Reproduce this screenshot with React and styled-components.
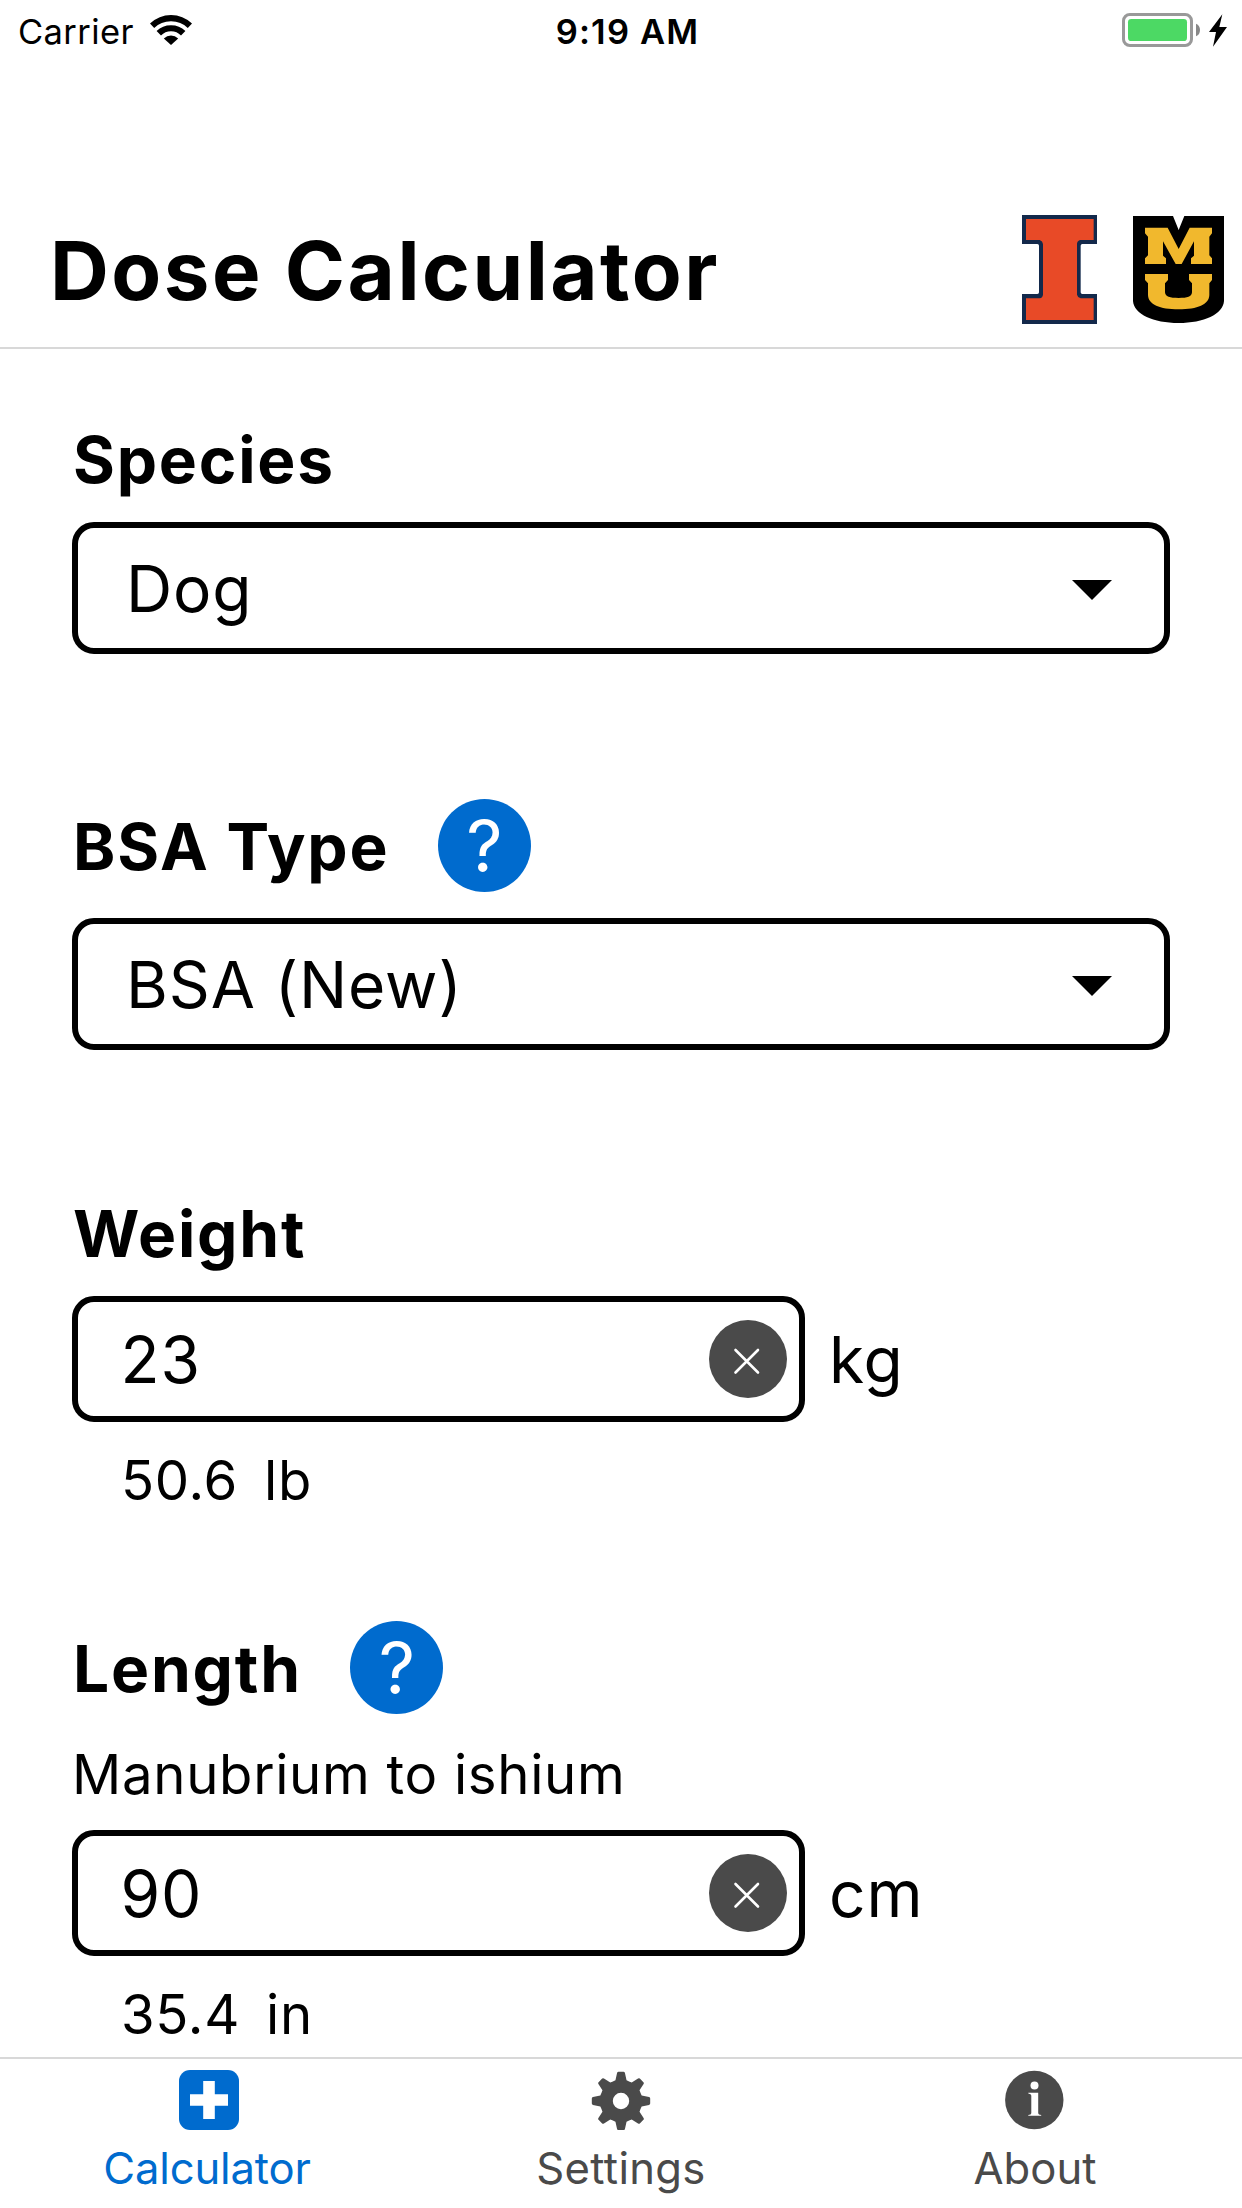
import React from "react";
import styled, { createGlobalStyle } from "styled-components";

const GlobalStyle = createGlobalStyle`
  *, *::before, *::after { box-sizing: border-box; }
  body { margin: 0; background: #fff; }
`;

const BLUE = "#006bce";
const GREY = "#4a4a4a";

const Screen = styled.div`
  width: 1242px;
  height: 2208px;
  display: flex;
  flex-direction: column;
  overflow: hidden;
  background: #fff;
  color: #000;
  font-family: Inter, "Liberation Sans", sans-serif;
`;

const StatusBar = styled.div`
  flex: none;
  height: 63px;
  display: grid;
  grid-template-columns: 1fr auto 1fr;
  padding: 0 14px 0 18px;
  font-size: 34.5px;
  line-height: 63px;
`;

const Carrier = styled.div`
  display: flex;
  gap: 16px;
  letter-spacing: 0.4px;
`;

const WifiIcon = styled.svg`
  width: 42px;
  height: 30px;
  margin-top: 15px;
`;

const Clock = styled.div`
  font-weight: 600;
  letter-spacing: 1.2px;
  padding-left: 9px;
`;

const BatteryIcon = styled.svg`
  width: 106px;
  height: 35px;
  margin-top: 13px;
  justify-self: end;
`;

const Header = styled.header`
  flex: none;
  height: 286px;
  display: flex;
  align-items: flex-start;
  padding: 152px 18px 0 50px;
  border-bottom: 2px solid #d8d8d8;
`;

const Title = styled.h1`
  flex: 1;
  margin: 6px 0 0;
  font-size: 81.5px;
  line-height: 100px;
  font-weight: 700;
  letter-spacing: 2.5px;
`;

const Logos = styled.div`
  display: flex;
  align-items: center;
  gap: 36px;
`;

const BlockLogo = styled.svg`
  width: 75px;
  height: 109px;
`;

const ShieldLogo = styled.svg`
  width: 91px;
  height: 107px;
`;

const Form = styled.main`
  flex: 1;
  min-height: 0;
  overflow: hidden;
  padding: 71px 72px 0;
`;

const Field = styled.section`
  margin-bottom: ${(p) => p.$after || 0}px;
`;

const LabelRow = styled.div`
  display: flex;
  align-items: center;
  gap: 48.5px;
  height: ${(p) => (p.$tall ? 94 : 80)}px;
  margin-bottom: ${(p) => p.$gap ?? 22}px;
`;

const Label = styled.h2`
  margin: 0;
  padding: ${(p) => (p.$tall ? 3 : 0)}px 0 0 1px;
  font-size: 64px;
  line-height: 80px;
  font-weight: 700;
  letter-spacing: 1.8px;
`;

const HelpButton = styled.button`
  width: 93px;
  height: 93px;
  flex: none;
  margin-top: 1px;
  padding: 0;
  border: 0;
  border-radius: 50%;
  background: ${BLUE};
  color: #fff;
  font: 400 71px/94px Inter, sans-serif;
  text-align: center;
`;

const Select = styled.div`
  height: 132px;
  display: flex;
  align-items: center;
  justify-content: space-between;
  padding: 1px 52px 0 48px;
  border: 6px solid #000;
  border-radius: 22px;
  font-size: 64px;
  line-height: 80px;
  letter-spacing: 0.9px;
`;

const Caret = styled.span`
  width: 0;
  height: 0;
  margin-top: 2px;
  border: 20px solid transparent;
  border-top-color: #000;
  border-bottom: 0;
`;

const InputRow = styled.div`
  display: flex;
  align-items: center;
  gap: 24px;
  font-size: 64px;
  line-height: 80px;
  letter-spacing: 0.9px;
`;

const InputBox = styled.div`
  width: 733px;
  height: 126px;
  display: flex;
  align-items: center;
  justify-content: space-between;
  padding: 0 12px 0 42.5px;
  border: 6px solid #000;
  border-radius: 22px;
`;

const Value = styled.span`
  padding-top: 1px;
`;

const ClearButton = styled.button`
  width: 78px;
  height: 78px;
  padding: 0;
  border: 0;
  border-radius: 50%;
  background: ${GREY};
  svg { display: block; width: 78px; height: 78px; }
`;

const Hint = styled.div`
  margin-bottom: 21px;
  font-size: 54.5px;
  line-height: 70px;
  letter-spacing: 0.7px;
`;

const Converted = styled.div`
  display: flex;
  gap: 26px;
  margin-top: 23px;
  padding-left: 49px;
  font-size: 54.5px;
  line-height: 70px;
  letter-spacing: 0.7px;
`;

const TabBar = styled.nav`
  flex: none;
  height: 151px;
  display: grid;
  grid-template-columns: repeat(3, 1fr);
  border-top: 2px solid #d8d8d8;
  background: #fff;
`;

const Tab = styled.div`
  display: flex;
  flex-direction: column;
  align-items: center;
  gap: 11px;
  padding-top: 11px;
  color: ${(p) => (p.$active ? BLUE : GREY)};
  font-size: 43.6px;
  line-height: 56px;
  letter-spacing: ${(p) => p.$spacing || 0}px;
  svg {
    width: 60px;
    height: 60px;
    margin-left: ${(p) => (p.$active ? 3 : 0)}px;
  }
`;

const pt = (r, deg) => {
  const a = (deg * Math.PI) / 180;
  return `${(30 + r * Math.sin(a)).toFixed(2)} ${(31 - r * Math.cos(a)).toFixed(2)}`;
};

// Eight tapered teeth around a hub, with a round hole in the middle.
const gearPath = () => {
  let d = "";
  for (let i = 0; i < 8; i += 1) {
    const c = i * 45;
    d += `${i ? "L" : "M"}${pt(21.4, c - 15)} L${pt(28.3, c - 8)} Q${pt(29.4, c - 7)} ${pt(29.3, c - 5)}`;
    d += ` L${pt(29.3, c + 5)} Q${pt(29.4, c + 7)} ${pt(28.3, c + 8)} L${pt(21.4, c + 15)}`;
    d += ` Q${pt(21, c + 22.5)} ${pt(21.4, c + 30)} `;
  }
  return `${d}Z M38.2 31 a8.2 8.2 0 1 0 -16.4 0 a8.2 8.2 0 1 0 16.4 0 Z`;
};

const CalculatorIcon = () => (
  <svg viewBox="0 0 60 60">
    <rect width="60" height="60" rx="11" fill="currentColor" />
    <path d="M24.2 11h11.6v13.2H49v11.6H35.8V49H24.2V35.8H11V24.2h13.2z" fill="#fff" />
  </svg>
);

const SettingsIcon = () => (
  <svg viewBox="0 0 60 60">
    <path d={gearPath()} fill="currentColor" fillRule="evenodd" />
  </svg>
);

const InfoIcon = () => (
  <svg viewBox="0 0 60 60">
    <circle cx="29.3" cy="30" r="29.2" fill="currentColor" />
    <circle cx="29.5" cy="15.6" r="4" fill="#fff" />
    <path d="M23.3 22.7h9.9v20.5q0 1.5 3 1.8v.8H23.3V45q3-.3 3-1.8V25.5q0-1.7-3-2z" fill="#fff" />
  </svg>
);

const Clear = () => (
  <ClearButton aria-label="Clear">
    <svg viewBox="0 0 78 78">
      <path d="M26.5 30 49 52.5M49 30 26.5 52.5" stroke="#fff" strokeWidth="2.6" strokeLinecap="round" />
    </svg>
  </ClearButton>
);

export default function App() {
  return (
    <Screen>
      <GlobalStyle />
      <StatusBar>
        <Carrier>
          Carrier
          <WifiIcon viewBox="0 0 42 30">
            <path d="M0 8.600Q9 0 21 0t21 8.600L37.800 13Q31 6.300 21 6.300T4.200 13z" />
            <path d="M6.600 16Q12.500 10.300 21 10.300T35.400 16L31 20.600Q27 16.300 21 16.300T11 20.600z" />
            <path d="M13.800 23.400Q17 20.600 21 20.600t7.200 2.800L21 30z" />
          </WifiIcon>
        </Carrier>
        <Clock>9:19 AM</Clock>
        <BatteryIcon viewBox="366 39 318 105">
          <rect x="370.500" y="43.500" width="204" height="93" rx="19" fill="none" stroke="#999" strokeWidth="9" />
          <rect x="384" y="57" width="177" height="66" rx="10" fill="#4cd964" />
          <path d="M588 71q12 5 12 19t-12 19z" fill="#888" />
          <path d="M667 43 627 96h21l-9 44 42-59h-23z" />
        </BatteryIcon>
      </StatusBar>
      <Header>
        <Title>Dose Calculator</Title>
        <Logos>
          <BlockLogo viewBox="66 645 225 327">
            <path fill="#13294b" d="M66 645H291V732H247Q242 732 242 737V877Q242 882 247 882H291V972H66V882H112Q117 882 117 877V737Q117 732 112 732H66Z" />
            <path fill="#e84a27" d="M78 657H281V720H240Q231 723 231 732V884Q233 893 242 895H281V960H78V895H119Q128 893 129 884V732Q128 723 119 720H78Z" />
          </BlockLogo>
          <ShieldLogo viewBox="399 648 273 321">
            <path d="M399 648H519L536 690 553 648H672V903C669 943 612 969 536 969S402 943 399 903Z" />
            <path fill="#f1b82d" d="M435 683H503L536 747 569 683H636V700L628 710V766L636 775V792H573V775L582 767V724L545 792H527L489 724V767L498 775V792H435V775L444 766V710L435 700Z" />
            <path fill="#f1b82d" d="M435 822H504V840L495 850V877C496 890 509 894 536 894S575 890 576 877V850L567 840V822H636V840L628 850V885C627 914 593 928 536 928S445 914 444 885V850L435 840Z" />
          </ShieldLogo>
        </Logos>
      </Header>
      <Form>
        <Field $after={144}>
          <LabelRow>
            <Label>Species</Label>
          </LabelRow>
          <Select>
            Dog
            <Caret />
          </Select>
        </Field>
        <Field $after={144}>
          <LabelRow $tall $gap={26}>
            <Label $tall>BSA Type</Label>
            <HelpButton>?</HelpButton>
          </LabelRow>
          <Select>
            BSA (New)
            <Caret />
          </Select>
        </Field>
        <Field $after={105}>
          <LabelRow>
            <Label>Weight</Label>
          </LabelRow>
          <InputRow>
            <InputBox>
              <Value>23</Value>
              <Clear />
            </InputBox>
            <Value>kg</Value>
          </InputRow>
          <Converted>
            <span>50.6</span>
            <span>lb</span>
          </Converted>
        </Field>
        <Field>
          <LabelRow $tall $gap={25}>
            <Label $tall>Length</Label>
            <HelpButton>?</HelpButton>
          </LabelRow>
          <Hint>Manubrium to ishium</Hint>
          <InputRow>
            <InputBox>
              <Value>90</Value>
              <Clear />
            </InputBox>
            <Value>cm</Value>
          </InputRow>
          <Converted>
            <span>35.4</span>
            <span>in</span>
          </Converted>
        </Field>
      </Form>
      <TabBar>
        <Tab $active $spacing={-0.15}>
          <CalculatorIcon />
          Calculator
        </Tab>
        <Tab $spacing={0.3}>
          <SettingsIcon />
          Settings
        </Tab>
        <Tab>
          <InfoIcon />
          About
        </Tab>
      </TabBar>
    </Screen>
  );
}
